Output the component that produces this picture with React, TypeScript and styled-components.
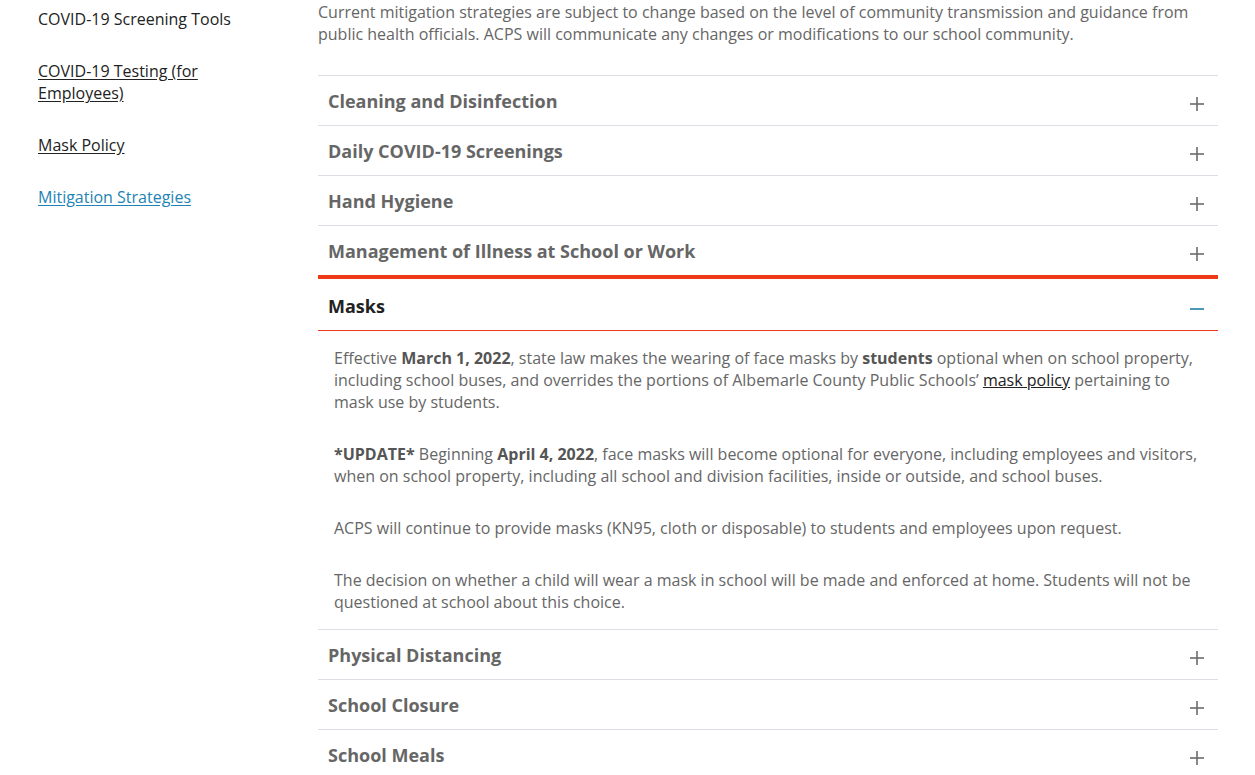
import styled, { createGlobalStyle } from 'styled-components'

const Global = createGlobalStyle`
    body {
        margin: 0;
        background: #fff;
        font-family: "Open Sans", "Noto Sans", sans-serif;
        color: #666;
    }
`;

const Page = styled.div`
    display: grid;
    grid-template-columns: 240px 900px;
    column-gap: 40px;
    padding-left: 38px;
    height: 775px;
    overflow: hidden;
`;

const SideNav = styled.nav`
    display: flex;
    flex-direction: column;
    gap: 30px;
    padding-top: 8px;
`;

const NavLink = styled.a<{ $plain?: boolean; $active?: boolean }>`
    font-size: 16px;
    line-height: 22px;
    color: ${p => (p.$active ? '#1d84b5' : '#222')};
    text-decoration: ${p => (p.$plain ? 'none' : 'underline')};
    text-underline-offset: 2px;
`;

const Main = styled.main`
    padding-top: 1px;
`;

const Intro = styled.p`
    margin: 0 0 30px;
    font-size: 16px;
    line-height: 22px;
    color: #666;
`;

const Accordion = styled.div`
    border-top: 1px solid #dddde3;
`;

const Item = styled.div<{ $open?: boolean }>`
    border-bottom: ${p => (p.$open ? '0' : '1px solid #dddde3')};
    border-top: ${p => (p.$open ? '4px solid #ee3a16' : '0')};
    margin-top: ${p => (p.$open ? '-1px' : '0')};
`;

const Header = styled.div<{ $open?: boolean }>`
    display: flex;
    align-items: center;
    justify-content: space-between;
    height: ${p => (p.$open ? '52px' : '49px')};
    padding: ${p => (p.$open ? '3px' : '0')} 14px 0 10px;
    border-bottom: ${p => (p.$open ? '1px solid #ee3a16' : '0')};
    box-sizing: border-box;
`;

const Title = styled.h3<{ $open?: boolean }>`
    margin: 0;
    font-size: 18px;
    font-weight: 700;
    color: ${p => (p.$open ? '#222' : '#666')};
`;

const Panel = styled.div`
    padding: 16px;
    border-bottom: 1px solid #dddde3;
    display: flex;
    flex-direction: column;
    gap: 30px;
`;

const Para = styled.p`
    margin: 0;
    font-size: 16px;
    line-height: 22px;
    color: #666;

    b {
        font-weight: 700;
        color: #555;
    }

    a {
        color: #222;
        text-decoration: underline;
    }
`;

const Icon = styled.svg`
    margin-top: 6px;
    flex-shrink: 0;
`;

const Toggle = ({ open }: { open?: boolean }) => (
    <Icon width="14" height="14" viewBox="0 0 14 14">
        <line x1="0" y1="7" x2="14" y2="7" stroke={open ? '#1f7ea8' : '#6b6b6b'} strokeWidth="1.6" />
        {!open && <line x1="7" y1="0" x2="7" y2="14" stroke="#6b6b6b" strokeWidth="1.6" />}
    </Icon>
);

const sections = [
    'Cleaning and Disinfection',
    'Daily COVID-19 Screenings',
    'Hand Hygiene',
    'Management of Illness at School or Work',
    'Masks',
    'Physical Distancing',
    'School Closure',
    'School Meals',
];

export default function App() {
    return (
        <>
            <Global />
            <Page>
                <SideNav>
                    <NavLink href="#" $plain>COVID-19 Screening Tools</NavLink>
                    <NavLink href="#">COVID-19 Testing (for Employees)</NavLink>
                    <NavLink href="#">Mask Policy</NavLink>
                    <NavLink href="#" $active>Mitigation Strategies</NavLink>
                </SideNav>
                <Main>
                    <Intro>
                        Current mitigation strategies are subject to change based on the level of community transmission and guidance from public health officials. ACPS will communicate any changes or modifications to our school community.
                    </Intro>
                    <Accordion>
                        {sections.map(name => {
                            const open = name === 'Masks';
                            return (
                                <Item key={name} $open={open}>
                                    <Header $open={open}>
                                        <Title $open={open}>{name}</Title>
                                        <Toggle open={open} />
                                    </Header>
                                    {open && (
                                        <Panel>
                                            <Para>
                                                Effective <b>March 1, 2022</b>, state law makes the wearing of face masks by <b>students</b> optional when on school property, including school buses, and overrides the portions of Albemarle County Public Schools’ <a href="#">mask policy</a> pertaining to mask use by students.
                                            </Para>
                                            <Para>
                                                <b>*UPDATE*</b> Beginning <b>April 4, 2022</b>, face masks will become optional for everyone, including employees and visitors, when on school property, including all school and division facilities, inside or outside, and school buses.
                                            </Para>
                                            <Para>
                                                ACPS will continue to provide masks (KN95, cloth or disposable) to students and employees upon request.
                                            </Para>
                                            <Para>
                                                The decision on whether a child will wear a mask in school will be made and enforced at home. Students will not be questioned at school about this choice.
                                            </Para>
                                        </Panel>
                                    )}
                                </Item>
                            );
                        })}
                    </Accordion>
                </Main>
            </Page>
        </>
    )
}
